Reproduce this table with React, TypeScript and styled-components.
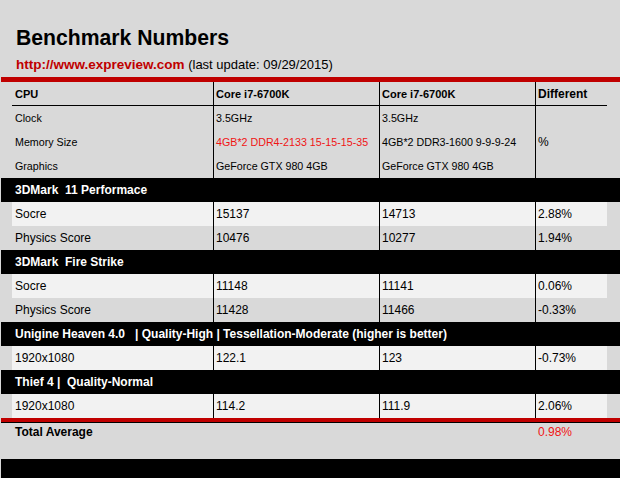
import React from "react";
import styled, { createGlobalStyle } from "styled-components";

const GlobalStyle = createGlobalStyle`
  html, body {
    margin: 0;
    padding: 0;
    background: #d9d9d9;
  }
  body {
    font-family: "Liberation Sans", Arial, sans-serif;
    color: #000;
  }
`;

const Page = styled.div`
  width: 620px;
  height: 478px;
  box-sizing: border-box;
  padding-left: 1px;
  display: flex;
  flex-direction: column;
  overflow: hidden;
  background: #d9d9d9;
`;

const Header = styled.header`
  padding: 26px 0 4px 15px;
  display: flex;
  flex-direction: column;
  gap: 7px;
`;

const Title = styled.h1`
  margin: 0;
  font-size: 21.2px;
  line-height: 24px;
  font-weight: bold;
  color: #000;
`;

const Subtitle = styled.div`
  font-size: 13px;
  line-height: 16px;
  color: #000;
  white-space: pre;
`;

const Link = styled.span`
  color: #c00000;
  font-weight: bold;
  font-size: 13.5px;
`;

const RedBar = styled.div<{ $h: number }>`
  height: ${(p) => p.$h}px;
  background: #c00000;
  flex: none;
`;

const Table = styled.div`
  display: flex;
  flex-direction: column;
`;

const Row = styled.div<{ $light?: boolean; $rule?: boolean }>`
  display: grid;
  grid-template-columns: 201px 166px 156px 72px;
  margin: 0 13px 0 11px;
  height: 24px;
  box-sizing: border-box;
  background: ${(p) => (p.$light ? "#f2f2f2" : "transparent")};
  border-bottom: ${(p) => (p.$rule ? "1px solid #000" : "none")};
`;

const Cell = styled.div<{
  $first?: boolean;
  $size?: number;
  $bold?: boolean;
  $red?: boolean;
}>`
  display: flex;
  align-items: center;
  box-sizing: border-box;
  padding-left: ${(p) => (p.$first ? 3 : 2)}px;
  border-left: ${(p) => (p.$first ? "none" : "1px solid #000")};
  font-size: ${(p) => p.$size ?? 12}px;
  font-weight: ${(p) => (p.$bold ? "bold" : "normal")};
  color: ${(p) => (p.$red ? "#f01414" : "#000")};
  white-space: pre;
`;

const Band = styled.div`
  height: 24px;
  background: #000;
  color: #fff;
  font-size: 12px;
  font-weight: bold;
  line-height: 24px;
  padding-left: 14px;
  white-space: pre;
`;

const BottomRule = styled.div`
  height: 4px;
  background: #c00000;
  border-bottom: 1px solid #000;
`;

const TotalRow = styled.div`
  display: grid;
  grid-template-columns: 201px 166px 156px 72px;
  margin: 0 13px 0 11px;
  height: 36px;
  align-items: start;
`;

const TotalCell = styled.div<{ $red?: boolean; $bold?: boolean }>`
  padding-left: 3px;
  font-size: 12px;
  line-height: 18px;
  font-weight: ${(p) => (p.$bold ? "bold" : "normal")};
  color: ${(p) => (p.$red ? "#f01414" : "#000")};
`;

const Footer = styled.div`
  flex: 1;
  background: #000;
`;

type DataRow = { label: string; a: string; b: string; d: string };

const sections: { title: string; rows: DataRow[] }[] = [
  {
    title: "3DMark  11 Performace",
    rows: [
      { label: "Socre", a: "15137", b: "14713", d: "2.88%" },
      { label: "Physics Score", a: "10476", b: "10277", d: "1.94%" },
    ],
  },
  {
    title: "3DMark  Fire Strike",
    rows: [
      { label: "Socre", a: "11148", b: "11141", d: "0.06%" },
      { label: "Physics Score", a: "11428", b: "11466", d: "-0.33%" },
    ],
  },
  {
    title:
      "Unigine Heaven 4.0   | Quality-High | Tessellation-Moderate (higher is better)",
    rows: [{ label: "1920x1080", a: "122.1", b: "123", d: "-0.73%" }],
  },
  {
    title: "Thief 4 |  Quality-Normal",
    rows: [{ label: "1920x1080", a: "114.2", b: "111.9", d: "2.06%" }],
  },
];

const SPEC = 10.7;

export default function App() {
  return (
    <>
      <GlobalStyle />
      <Page>
        <Header>
          <Title>Benchmark Numbers</Title>
          <Subtitle>
            <Link>http://www.expreview.com</Link> (last update: 09/29/2015)
          </Subtitle>
        </Header>
        <RedBar $h={5} />
        <Table>
          <Row $rule>
            <Cell $first $bold $size={11}>CPU</Cell>
            <Cell $bold $size={11}>Core i7-6700K</Cell>
            <Cell $bold $size={11}>Core i7-6700K</Cell>
            <Cell $bold $size={12}>Different</Cell>
          </Row>
          <Row>
            <Cell $first $size={SPEC}>Clock</Cell>
            <Cell $size={SPEC}>3.5GHz</Cell>
            <Cell $size={SPEC}>3.5GHz</Cell>
            <Cell $size={SPEC}></Cell>
          </Row>
          <Row>
            <Cell $first $size={SPEC}>Memory Size</Cell>
            <Cell $size={SPEC} $red>4GB*2 DDR4-2133 15-15-15-35</Cell>
            <Cell $size={SPEC}>4GB*2 DDR3-1600 9-9-9-24</Cell>
            <Cell $size={12}>%</Cell>
          </Row>
          <Row>
            <Cell $first $size={SPEC}>Graphics</Cell>
            <Cell $size={SPEC}>GeForce GTX 980 4GB</Cell>
            <Cell $size={SPEC}>GeForce GTX 980 4GB</Cell>
            <Cell $size={SPEC}></Cell>
          </Row>
          {sections.map((s) => (
            <React.Fragment key={s.title}>
              <Band>{s.title}</Band>
              {s.rows.map((r, i) => (
                <Row key={r.label + i} $light={i % 2 === 0}>
                  <Cell $first>{r.label}</Cell>
                  <Cell>{r.a}</Cell>
                  <Cell>{r.b}</Cell>
                  <Cell>{r.d}</Cell>
                </Row>
              ))}
            </React.Fragment>
          ))}
          <BottomRule />
          <TotalRow>
            <TotalCell $bold>Total Average</TotalCell>
            <TotalCell />
            <TotalCell />
            <TotalCell $red>0.98%</TotalCell>
          </TotalRow>
        </Table>
        <Footer />
      </Page>
    </>
  );
}
